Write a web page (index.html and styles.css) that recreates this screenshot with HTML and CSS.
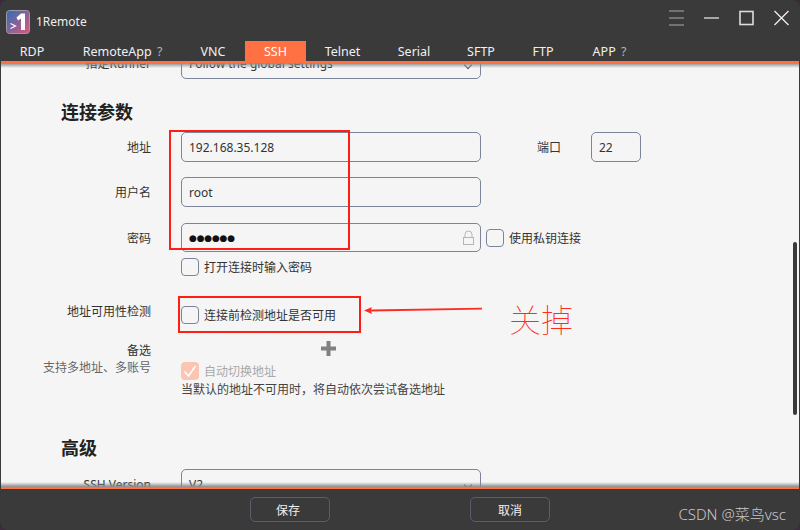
FILE: index.html
```html
<!DOCTYPE html>
<html>
    <head>
        <title>1Remote</title>
        <link rel="stylesheet" href="styles.css">
    </head>
    <body>
        <div class="window">
            <div class="titlebar">
                <svg class="logo" width="24" height="24" viewBox="0 0 24 24">
                    <defs>
                        <linearGradient id="logograd" x1="0" y1="0" x2="1" y2="1">
                            <stop offset="0" stop-color="#2a6fb8"/>
                            <stop offset="1" stop-color="#e2557c"/>
                        </linearGradient>
                    </defs>
                    <rect x="0.5" y="0.5" width="23" height="23" rx="3" fill="url(#logograd)" stroke="#9a9aa8"/>
                    <path d="M4.5 13.5 L9.5 16 L4.5 18.5" fill="none" stroke="#fff" stroke-width="1.2"/>
                    <path d="M10.5 7.5 L15 3.5 H19 V20 H15 V8.5 L12 10.5 Z" fill="#fff"/>
                </svg>
                <span class="app-name">1Remote</span>
                <div class="win-btns">
                    <svg width="15" height="16" viewBox="0 0 15 16"><path d="M0 1H15M0 8H15M0 15H15" stroke="#aaa" stroke-width="1.2"/></svg>
                    <svg width="15" height="16" viewBox="0 0 15 16"><path d="M0 8H15" stroke="#eee" stroke-width="1.2"/></svg>
                    <svg width="15" height="16" viewBox="0 0 15 16"><rect x="1" y="1.5" width="13" height="13" fill="none" stroke="#ddd" stroke-width="1.6"/></svg>
                    <svg width="15" height="16" viewBox="0 0 15 16"><path d="M0.5 1L14.5 15M14.5 1L0.5 15" stroke="#eee" stroke-width="1.3"/></svg>
                </div>
            </div>
            <div class="tabs">
                <div class="tab tab-rdp">RDP</div>
                <div class="tab tab-app">RemoteApp <span class="q">?</span></div>
                <div class="tab tab-vnc">VNC</div>
                <div class="tab tab-ssh active">SSH</div>
                <div class="tab tab-telnet">Telnet</div>
                <div class="tab tab-serial">Serial</div>
                <div class="tab tab-sftp">SFTP</div>
                <div class="tab tab-ftp">FTP</div>
                <div class="tab tab-last">APP <span class="q">?</span></div>
            </div>

            <div class="content">
                <div class="form">
                    <div class="row row-runner">
                        <div class="label">指定Runner</div>
                        <div class="field select">Follow the global settings<span class="chevron"></span></div>
                    </div>

                    <h2 class="section-one">连接参数</h2>

                    <div class="row row-addr">
                        <div class="label">地址</div>
                        <div class="field">192.168.35.128</div>
                        <div class="port-label">端口</div>
                        <div class="field port">22</div>
                    </div>
                    <div class="row row-user">
                        <div class="label">用户名</div>
                        <div class="field">root</div>
                    </div>
                    <div class="row row-pass">
                        <div class="label">密码</div>
                        <div class="field pass">
                            <span class="dots">●●●●●●</span>
                            <svg class="lock" width="13" height="16" viewBox="0 0 13 16">
                                <path d="M3 7V4.5a3.5 3.5 0 0 1 7 0V7" fill="none" stroke="#b5b5b5" stroke-width="1"/>
                                <rect x="1.5" y="7.5" width="10" height="7" fill="none" stroke="#b5b5b5" stroke-width="1"/>
                            </svg>
                        </div>
                        <label class="check check-key"><span class="box"></span>使用私钥连接</label>
                    </div>
                    <div class="row row-ask">
                        <div class="label"></div>
                        <label class="check"><span class="box"></span>打开连接时输入密码</label>
                    </div>
                    <div class="row row-detect">
                        <div class="label label-up">地址可用性检测</div>
                        <label class="check"><span class="box box-strong"></span>连接前检测地址是否可用</label>
                    </div>
                    <div class="row row-alt">
                        <div class="label label-alt">
                            <div>备选</div>
                            <div class="hint">支持多地址、多账号</div>
                        </div>
                        <div class="alt-body">
                            <svg class="plus" width="15" height="15" viewBox="0 0 15 15"><path d="M7.5 0V15M0 7.5H15" stroke="#808080" stroke-width="4"/></svg>
                            <label class="check check-off">
                                <span class="box box-on">
                                    <svg width="18" height="18" viewBox="0 0 18 18"><path d="M3.5 9.5L7.5 14L14.5 4" fill="none" stroke="#fff" stroke-width="1.6"/></svg>
                                </span>自动切换地址
                            </label>
                            <div class="note">当默认的地址不可用时，将自动依次尝试备选地址</div>
                        </div>
                    </div>

                    <h2 class="section-two">高级</h2>

                    <div class="row row-version">
                        <div class="label">SSH Version</div>
                        <div class="field select">V2<span class="chevron"></span></div>
                    </div>
                </div>
                <div class="scroll-thumb"></div>
            </div>

            <div class="footer">
                <button class="save">保存</button>
                <button class="cancel">取消</button>
                <span class="mark">CSDN @菜鸟vsc</span>
            </div>

            <!-- red marks drawn over the screenshot -->
            <div class="mark-box mark-one"></div>
            <div class="mark-box mark-two"></div>
            <svg class="mark-arrow" width="120" height="12" viewBox="0 0 120 12">
                <path d="M1 6.5L9 3L8 5.4L119 3.8V5.4L8 7.6L9 10Z" fill="#ff2a20"/>
            </svg>
            <div class="mark-text">关掉</div>
        </div>
    </body>
</html>
```

FILE: styles.css
```css
body{
    margin: 0;
    padding: 0;
    width: 800px;
    height: 530px;
    overflow: hidden;
    background: #3a2a3a;
    font-family: "Noto Sans", "Noto Sans CJK SC", sans-serif;
    font-size: 12px;
    color: #333;
}

.window{
    position: relative;
    width: 800px;
    height: 530px;
    display: flex;
    flex-direction: column;
    background: #3a3a3a;
    border-radius: 8px;
    overflow: hidden;
}

.titlebar{
    height: 41px;
    flex: none;
    display: flex;
    align-items: center;
    padding: 1px 11px 0 6px;
    box-sizing: border-box;
}
.logo{
    margin-top: 1px;
}
.app-name{
    margin-left: 6px;
    font-size: 12px;
    color: #eee;
}
.win-btns{
    margin-left: auto;
    margin-top: -6px;
    display: flex;
    gap: 20px;
}

.tabs{
    height: 20px;
    flex: none;
    display: flex;
    color: #f0f0f0;
    font-size: 12.5px;
}
.tab{
    display: flex;
    align-items: center;
    justify-content: center;
    white-space: pre;
}
.tab-rdp{ width: 64px; }
.tab-app{ width: 117px; }
.tab-vnc{ width: 64px; }
.tab-ssh{ width: 61px; }
.tab-telnet{ width: 73px; }
.tab-serial{ width: 70px; }
.tab-sftp{ width: 64px; }
.tab-ftp{ width: 60px; }
.tab-last{ width: 73px; }
.active{
    background: #ff7043;
    color: #fff;
}
.q{
    color: #b5b5b5;
    margin-left: 2px;
}

.content{
    position: relative;
    flex: 1;
    min-height: 0;
    margin: 0 1px 0 1px;
    background: #f5f5f5;
    border-top: 2px solid #ff7043;
    border-bottom: 2px solid #ff7043;
    overflow: hidden;
}
.content::before, .content::after{
    content: "";
    position: absolute;
    left: 0;
    right: 0;
    height: 5px;
    z-index: 2;
}
.content::before{
    top: 0;
    background: linear-gradient(#8a8a8a, rgba(245,245,245,0));
}
.content::after{
    bottom: 0;
    background: linear-gradient(rgba(245,245,245,0), #8a8a8a);
}

.form{
    margin-top: -14px;
}
.row{
    display: flex;
    align-items: center;
}
.label{
    width: 150px;
    flex: none;
    text-align: right;
    margin-right: 30px;
}
.label-up{
    align-self: flex-start;
    line-height: 18px;
    margin-top: -3px;
}
.label-alt{
    line-height: 17px;
    margin-top: 1px;
}
.field{
    width: 300px;
    box-sizing: border-box;
    border: 1px solid #7b8499;
    border-radius: 5px;
    padding: 0 7px;
    display: flex;
    align-items: center;
    color: #333;
    height: 30px;
    position: relative;
}
.row-runner .label, .row-runner .field{
    padding-bottom: 2px;
}
.select{
    background: #f5f5f5;
}
.chevron{
    position: absolute;
    right: 9px;
    top: 12px;
    width: 5px;
    height: 5px;
    border-right: 1px solid #555;
    border-bottom: 1px solid #555;
    transform: rotate(45deg);
}

h2{
    margin: 0;
    padding-left: 60px;
    font-size: 18px;
    font-weight: 700;
    color: #222;
    line-height: 24px;
}
.section-one{ margin-top: 21px; }
.section-two{ margin-top: 39px; }

.row-addr{ margin-top: 8px; }
.row-user{ margin-top: 15px; }
.row-pass{ margin-top: 16px; }
.row-ask{ margin-top: 6px; }
.row-detect{ margin-top: 30px; }
.row-alt{ margin-top: 17px; align-items: flex-start; }
.row-version{ margin-top: 9px; }

.port-label{
    width: 110px;
    box-sizing: border-box;
    padding-left: 56px;
}
.port{
    width: 50px;
}
.pass{
    height: 29px;
}
.dots{
    color: #111;
    font-size: 9px;
    letter-spacing: -0.2px;
    font-family: "DejaVu Sans", sans-serif;
}
.lock{
    position: absolute;
    right: 5px;
    top: 6px;
}

.check{
    display: flex;
    align-items: center;
    gap: 5px;
    color: #333;
}
.check-key{
    margin-left: 5px;
}
.box{
    width: 18px;
    height: 18px;
    box-sizing: border-box;
    border: 1px solid #7b8499;
    border-radius: 4px;
    display: block;
}
.box-strong{
    border-width: 1.5px;
}
.box-on{
    background: #fcc4b2;
    border: none;
}
.check-off{
    color: #a8a8a8;
}

.hint{
    color: #666;
}
.alt-body{
    display: flex;
    flex-direction: column;
    align-items: flex-start;
}
.plus{
    margin: 0 0 6px 140px;
}
.note{
    color: #444;
    line-height: 15px;
    margin-top: 2px;
}

.scroll-thumb{
    position: absolute;
    right: 2px;
    top: 179px;
    width: 4px;
    height: 173px;
    background: #3a3a3a;
    border-radius: 2px;
}

.footer{
    height: 41px;
    flex: none;
    position: relative;
    display: flex;
    padding-top: 8px;
    box-sizing: border-box;
    padding-left: 250px;
    gap: 140px;
}
button{
    width: 80px;
    height: 25px;
    border: 1px solid #5a5e6c;
    border-radius: 5px;
    background: #3a3a3a;
    color: #f0f0f0;
    font-family: inherit;
    font-size: 12px;
    padding: 0;
}
.save{
    padding-right: 4px;
}
.mark{
    position: absolute;
    right: 14px;
    top: 14px;
    font-size: 15px;
    font-weight: 300;
    color: #c8c8c8;
    white-space: pre;
}

.mark-box{
    position: absolute;
    border: 2px solid #ff1e14;
    box-sizing: border-box;
}
.mark-one{
    left: 169px;
    top: 130px;
    width: 181px;
    height: 120px;
}
.mark-two{
    left: 178px;
    top: 296px;
    width: 183px;
    height: 37px;
}
.mark-arrow{
    position: absolute;
    left: 363px;
    top: 304px;
}
.mark-text{
    position: absolute;
    left: 509px;
    top: 296px;
    font-size: 32px;
    line-height: 44px;
    font-weight: 100;
    color: #ff2a20;
    font-family: "Noto Sans CJK SC", sans-serif;
}
```
